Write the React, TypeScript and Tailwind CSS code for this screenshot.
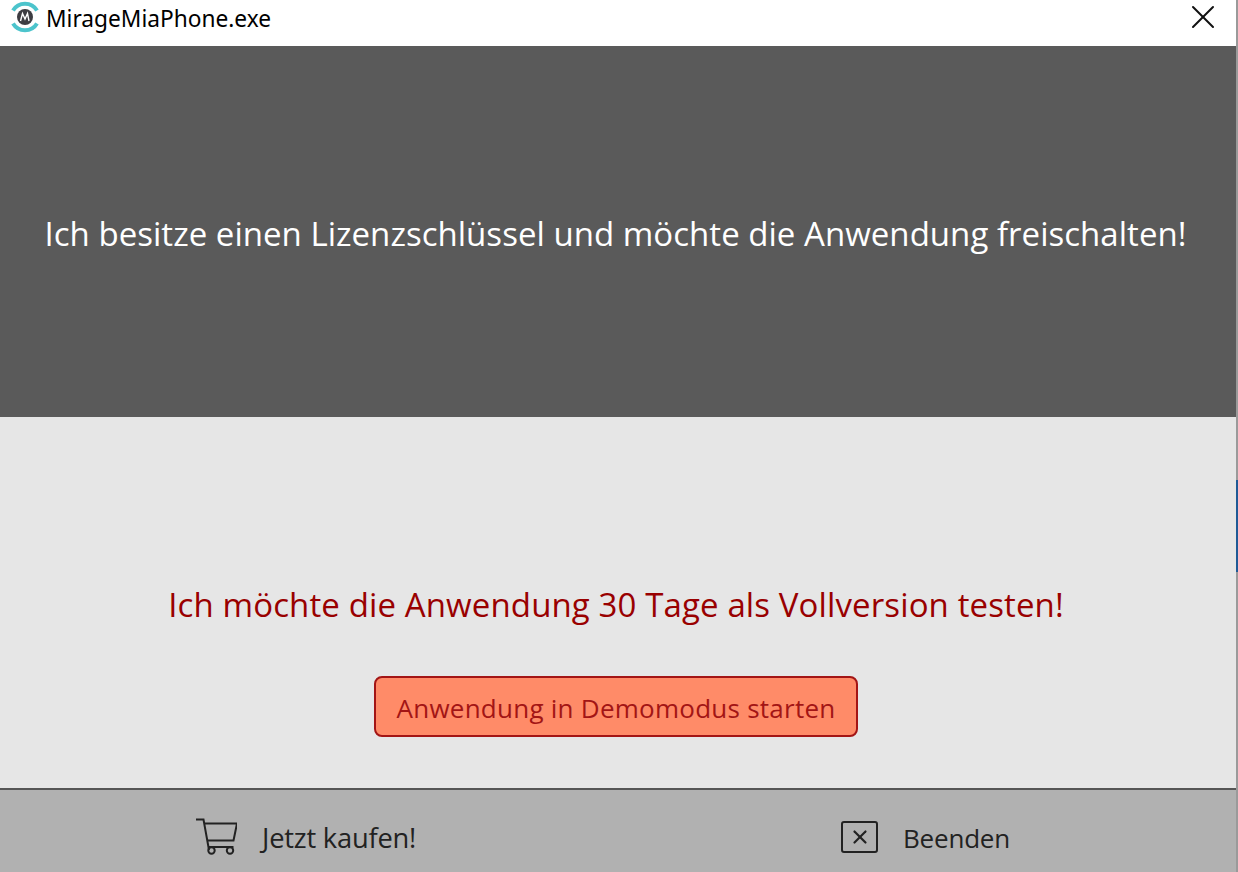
import { X } from "lucide-react";

function AppIcon() {
  return (
    <svg width="30" height="34" viewBox="0 0 30 34" className="shrink-0">
      <path d="M3 10.5 A14 14 0 0 1 27 10.5" fill="none" stroke="#4cc4cc" strokeWidth="4" />
      <path d="M3 23.5 A14 14 0 0 0 27 23.5" fill="none" stroke="#4cc4cc" strokeWidth="4" />
      <circle cx="15" cy="17" r="8" fill="#3d3d42" />
      <path d="M10.5 21 L12.5 13.5 L15 19 L17.5 13.5 L19 21" fill="none" stroke="#ffffff" strokeWidth="1.4" />
    </svg>
  );
}

function CartIcon() {
  return (
    <svg width="42" height="38" viewBox="0 0 42 38" fill="none" stroke="#222222" strokeWidth="2" className="shrink-0">
      <path d="M1 1.5 H8.5 L14 32" />
      <path d="M9.5 5.5 H42 L38.5 22.5 H12.5" />
      <path d="M14 29 H38.5" />
      <circle cx="16.5" cy="32.5" r="3.2" />
      <circle cx="35" cy="32.5" r="3.2" />
    </svg>
  );
}

export default function App() {
  return (
    <div className="flex h-[872px] w-[1238px] overflow-hidden bg-white font-['Open_Sans','Noto_Sans',sans-serif]">
      <div className="flex min-w-0 flex-1 flex-col">
        <div className="flex h-[46px] items-center justify-between bg-white pb-[12px] pl-[10px] pr-[13px]">
          <div className="flex items-center gap-[6px]">
            <AppIcon />
            <span className="pt-[4px] font-['Noto_Sans',sans-serif] text-[22.7px] leading-none text-black">MirageMiaPhone.exe</span>
          </div>
          <X className="h-[40px] w-[40px] text-[#111111]" strokeWidth={1.2} />
        </div>

        <div className="flex h-[371px] items-center justify-center bg-[#5a5a5a] pr-[5px] pt-[4px]">
          <span className="text-[33px] leading-none tracking-[0.03px] text-white">
            Ich besitze einen Lizenzschlüssel und möchte die Anwendung freischalten!
          </span>
        </div>

        <div className="flex h-[371px] flex-col items-center justify-end bg-[#e6e6e6] pb-[51px] pr-[4px]">
          <span className="mb-[55px] text-[33px] leading-none tracking-[0.12px] text-[#990000]">
            Ich möchte die Anwendung 30 Tage als Vollversion testen!
          </span>
          <button
            type="button"
            className="h-[61px] w-[484px] rounded-[8px] border-2 border-[#a31515] bg-[#ff8b68] pt-[2px] text-[26px] leading-none tracking-[0.25px] text-[#a31515]"
          >
            Anwendung in Demomodus starten
          </button>
        </div>

        <div className="flex flex-1 border-t-2 border-[#555555] bg-[#b1b1b1] tracking-[-0.2px] text-[#222222]">
          <div className="flex w-1/2 items-center pl-[195px] pt-[12px]">
            <CartIcon />
            <span className="ml-[25px] mt-[2px] text-[27.3px] leading-none">Jetzt kaufen!</span>
          </div>
          <div className="flex w-1/2 items-center pl-[223px] pt-[12px]">
            <div className="flex h-[32px] w-[37px] items-center justify-center rounded-[3px] border-2 border-[#222222]">
              <X className="h-[22px] w-[22px] shrink-0" strokeWidth={2.4} />
            </div>
            <span className="ml-[25px] mt-[2px] text-[26px] leading-none">Beenden</span>
          </div>
        </div>
      </div>

      <div className="flex w-[2px] flex-col bg-[#9a9a9a]">
        <div className="mt-[480px] h-[92px] bg-[#1f5a96]" />
      </div>
    </div>
  );
}
